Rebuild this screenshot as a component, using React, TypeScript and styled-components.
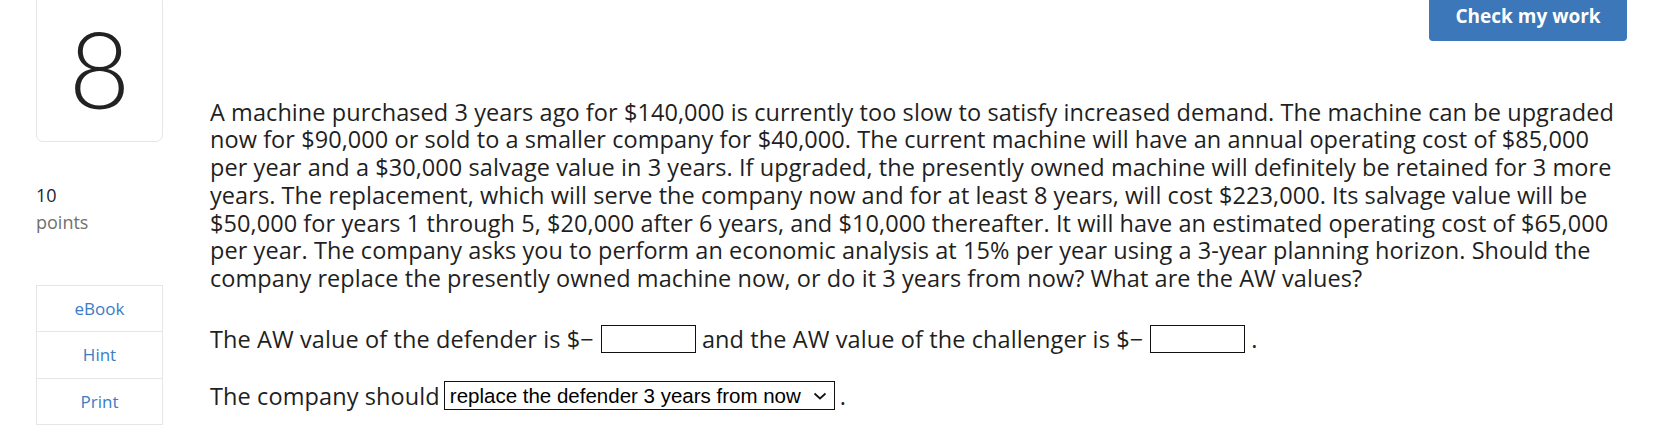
import React from "react";
import styled, { createGlobalStyle } from "styled-components";

const Global = createGlobalStyle`
  html, body { margin: 0; padding: 0; background: #fff; overflow: hidden; }
  body { font-family: "Open Sans", Lato, Arial, sans-serif; color: #1f1f1f; }
  * { box-sizing: border-box; }
`;

const Page = styled.div`
  display: flex;
  width: 1660px;
  height: 425px;
  overflow: hidden;
`;

const Sidebar = styled.aside`
  width: 127px;
  flex: none;
  margin-left: 36px;
  display: flex;
  flex-direction: column;
`;

const NumberBox = styled.div`
  margin-top: -6px;
  height: 149px;
  border: 1px solid #e6e6e6;
  border-radius: 7px;
  display: flex;
  align-items: center;
  justify-content: center;
  font-family: Lato, sans-serif;
  font-weight: 300;
  font-size: 106px;
  line-height: 1;
  color: #222;
`;

const Points = styled.div`
  margin-top: 40px;
  font-size: 18px;
  line-height: 27px;
  color: #1a2638;
`;

const PointsLabel = styled.div`
  font-size: 18px;
  line-height: 27px;
  color: #707070;
`;

const ToolList = styled.div`
  margin-top: 49px;
  border: 1px solid #e6e6e6;
  border-bottom: none;
  display: flex;
  flex-direction: column;
`;

const ToolItem = styled.div`
  height: 46.5px;
  display: flex;
  align-items: center;
  justify-content: center;
  border-bottom: 1px solid #e6e6e6;
  color: #3a7cc6;
  font-size: 17px;
`;

const Main = styled.main`
  flex: 1;
  margin-left: 47px;
  padding-right: 33px;
  display: flex;
  flex-direction: column;
`;

const TopBar = styled.div`
  display: flex;
  justify-content: flex-end;
`;

const CheckButton = styled.button`
  margin-top: -6px;
  width: 198px;
  height: 47px;
  border: none;
  border-radius: 4px;
  background: #3b77b9;
  color: #fff;
  font-family: "Open Sans", sans-serif;
  font-weight: 700;
  font-size: 19px;
  padding: 0 0 4px 0;
`;

const Question = styled.p`
  margin: 57.7px 0 0;
  font-size: 23.5px;
  line-height: 27.7px;
  letter-spacing: 0.07px;
  color: #1f1f1f;
  white-space: nowrap;
`;

const AnswerLine = styled.div<{ $gap: number }>`
  margin-top: ${(p) => p.$gap}px;
  display: flex;
  align-items: center;
  height: 28px;
  font-size: 23.5px;
  letter-spacing: 0.1px;
  color: #1f1f1f;
  white-space: pre;
`;

const NumInput = styled.input`
  width: 95px;
  height: 28px;
  border: 1px solid #111;
  margin: 0 6px 0 7px;
  padding: 0 4px;
  font-size: 16px;
  background: #fff;
`;

const SelectWrap = styled.span`
  position: relative;
  display: inline-flex;
  margin: 0 5px 0 4px;
`;

const Select = styled.select`
  appearance: none;
  width: 391px;
  height: 29px;
  border: 1px solid #111;
  border-radius: 0;
  background: #fff;
  color: #000;
  font-family: "Liberation Sans", Arial, sans-serif;
  font-size: 20.5px;
  letter-spacing: 0;
  padding: 0 0 0 5px;
`;

const Chevron = styled.svg`
  position: absolute;
  right: 8px;
  top: 11px;
  pointer-events: none;
`;

const lines = [
  "A machine purchased 3 years ago for $140,000 is currently too slow to satisfy increased demand. The machine can be upgraded",
  "now for $90,000 or sold to a smaller company for $40,000. The current machine will have an annual operating cost of $85,000",
  "per year and a $30,000 salvage value in 3 years. If upgraded, the presently owned machine will definitely be retained for 3 more",
  "years. The replacement, which will serve the company now and for at least 8 years, will cost $223,000. Its salvage value will be",
  "$50,000 for years 1 through 5, $20,000 after 6 years, and $10,000 thereafter. It will have an estimated operating cost of $65,000",
  "per year. The company asks you to perform an economic analysis at 15% per year using a 3-year planning horizon. Should the",
  "company replace the presently owned machine now, or do it 3 years from now? What are the AW values?",
];

export default function App() {
  return (
    <>
      <Global />
      <Page>
        <Sidebar>
          <NumberBox>8</NumberBox>
          <Points>10</Points>
          <PointsLabel>points</PointsLabel>
          <ToolList>
            <ToolItem>eBook</ToolItem>
            <ToolItem>Hint</ToolItem>
            <ToolItem>Print</ToolItem>
          </ToolList>
        </Sidebar>
        <Main>
          <TopBar>
            <CheckButton>Check my work</CheckButton>
          </TopBar>
          <Question>
            {lines.map((l, i) => (
              <React.Fragment key={i}>
                {l}
                {i < lines.length - 1 && <br />}
              </React.Fragment>
            ))}
          </Question>
          <AnswerLine $gap={32}>
            The AW value of the defender is $−
            <NumInput type="text" />
            and the AW value of the challenger is $−
            <NumInput type="text" />
            .
          </AnswerLine>
          <AnswerLine $gap={29}>
            The company should
            <SelectWrap>
              <Select defaultValue="later">
                <option value="later">replace the defender 3 years from now</option>
                <option value="now">replace the defender now</option>
              </Select>
              <Chevron width="14" height="8" viewBox="0 0 14 8">
                <path d="M1.5 1.5 L7 6.5 L12.5 1.5" fill="none" stroke="#111" strokeWidth="1.7" />
              </Chevron>
            </SelectWrap>
            .
          </AnswerLine>
        </Main>
      </Page>
    </>
  );
}
